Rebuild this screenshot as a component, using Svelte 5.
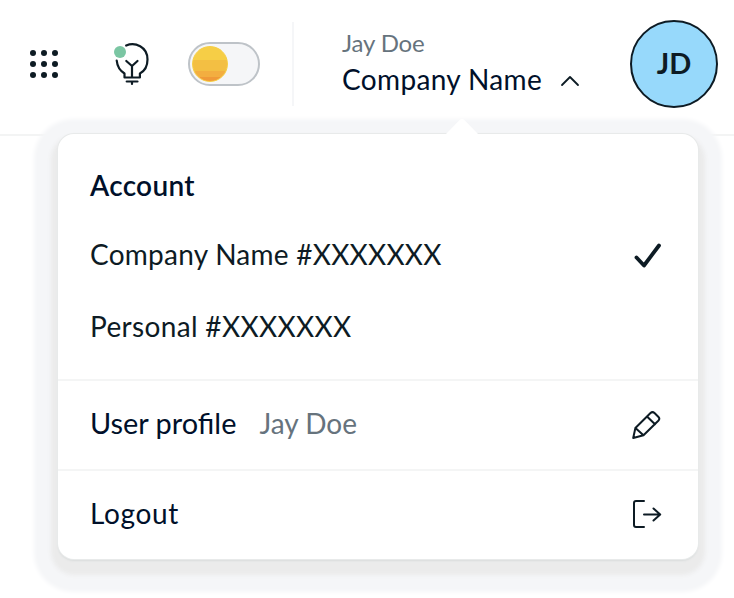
<script>
  const dots = [0, 1, 2].flatMap((r) => [0, 1, 2].map((c) => [c * 11 + 3, r * 11 + 3]));
  const accounts = [
    { name: 'Company Name #XXXXXXX', cls: 'company', active: true },
    { name: 'Personal #XXXXXXX', cls: 'personal', active: false },
  ];
</script>

<div class="page">
  <header>
    <button class="apps" aria-label="Apps">
      <svg width="28" height="28" viewBox="0 0 28 28">
        {#each dots as [x, y]}<circle cx={x} cy={y} r="3" fill="#0d1b24" />{/each}
      </svg>
    </button>
    <button class="bulb" aria-label="Tips">
      <svg width="36" height="44" viewBox="0 0 36 44" fill="none" stroke="#0d1b24" stroke-width="2.2" stroke-linecap="round" stroke-linejoin="round">
        <path d="M12.200 3.500C21-.2 33.500 4.500 33.500 17.500C33.500 25 29.700 29.500 25.900 31.500V35.500H10.500V31.500C6.500 29 3.300 25 2.700 18.500" />
        <path d="M18 35V24L12.300 19M18 24L23.500 19M12.700 39.500H23.500M18 39.500V42" />
        <circle cx="6" cy="10" r="6" fill="#7bc6a3" stroke="none" />
      </svg>
    </button>
    <div class="toggle"><div class="sun"></div></div>
    <div class="rule"></div>
    <button class="identity">
      <span class="names">
        <span class="user">Jay Doe</span>
        <span class="org">Company Name</span>
      </span>
      <svg width="20" height="12" viewBox="0 0 20 12" fill="none" stroke="#0d1b24" stroke-width="1.8" stroke-linecap="round" stroke-linejoin="round"><path d="M2 10L10 2L18 10" /></svg>
    </button>
    <div class="avatar">JD</div>
  </header>

  <div class="menu">
    <svg class="arrow" width="34" height="17" viewBox="0 0 34 17"><path d="M0 17L14.500 2Q17 0 19.500 2L34 17Z" fill="#fff" /></svg>
    <section class="accounts">
      <h2>Account</h2>
      {#each accounts as a}
        <div class="row">
          <span class={a.cls}>{a.name}</span>
          {#if a.active}
            <svg width="28" height="26" viewBox="0 0 28 26" fill="none" stroke="#0d1b24" stroke-width="3.8" stroke-linecap="round" stroke-linejoin="round"><path d="M2.500 14.500L10 22.500L25 2.500" /></svg>
          {/if}
        </div>
      {/each}
    </section>
    <section class="row line dark">
      <span class="profile">User profile</span>
      <span class="muted">Jay Doe</span>
      <svg width="30" height="30" viewBox="0 0 30 30" fill="none" stroke="#0d1b24" stroke-width="2" stroke-linejoin="round" stroke-linecap="round">
        <path d="M1.200 28L3.400 18L18.500 3Q20.500 1.200 22.500 3L26.500 7Q28.200 8.800 26.300 10.800L11.500 25.300ZM3.400 18L11.500 25.300M15 6.500L23 14.300" />
      </svg>
    </section>
    <section class="row line dark">
      <span class="logout">Logout</span>
      <svg width="30" height="30" viewBox="0 0 30 30" fill="none" stroke="#0d1b24" stroke-width="2" stroke-linecap="round" stroke-linejoin="round">
        <path d="M12 1H4Q2 1 2 3V25Q2 27 4 27H12M12 14.500H28M21.500 8.500L28.200 14.500L21.500 20.500" />
      </svg>
    </section>
  </div>
</div>

<style>
  :global(body) { background: #fff; }
  .page {
    position: relative;
    width: 734px;
    height: 598px;
    overflow: hidden;
    background: #fff;
    color: #0d1b24;
    font: 28px/36px Lato, "Noto Sans", sans-serif;
  }
  button { padding: 0; border: 0; background: none; font: inherit; color: inherit; text-align: left; }
  svg { display: block; flex: none; }
  header {
    position: relative;
    z-index: 1;
    display: flex;
    box-sizing: border-box;
    height: 128px;
    padding: 20px 16px 20px 30px;
    align-items: center;
  }
  .apps { margin-right: 56px; }
  .bulb { margin-right: 38px; }
  .toggle {
    box-sizing: border-box;
    width: 72px;
    height: 44px;
    padding: 2px;
    border: 2px solid #bec3c8;
    border-radius: 22px;
    background: #f5f6f8;
  }
  .sun {
    box-sizing: border-box;
    width: 36px;
    height: 36px;
    border: 1.5px solid #f7ce43;
    border-radius: 50%;
    background: linear-gradient(#f6ce46 0 38%, #f3bf43 38% 70%, #f3ae40 70% 88%, #f09a38 88%);
  }
  .rule { width: 2px; height: 84px; margin: 0 48px 0 32px; background: #f5f6f8; }
  .identity { display: flex; width: 288px; height: 88px; align-items: flex-start; }
  .names { width: 218px; display: flex; flex-direction: column; padding-top: 7px; }
  .user { font-size: 24px; line-height: 32px; letter-spacing: -0.15px; color: #66737d; }
  .org { color: #00102a; line-height: 40px; letter-spacing: 0.36px; }
  .identity svg { margin-top: 55px; }
  .avatar {
    box-sizing: border-box;
    flex: none;
    width: 88px;
    height: 88px;
    border: 2px solid #0d1b24;
    border-radius: 50%;
    background: #97d9fb;
    text-align: center;
    font-weight: 700;
    font-size: 29px;
    line-height: 82px;
  }
  .page::before {
    content: "";
    position: absolute;
    top: 134px;
    width: 100%;
    height: 2px;
    background: #f3f4f4;
  }
  .menu {
    position: absolute;
    left: 58px;
    top: 134px;
    width: 640px;
    height: 425px;
    border-radius: 16px;
    background: #fff;
    box-shadow: 0 0 0 1px #e8eaea, 0 2px 2px 0 #d9dcdc, 0 9px 4px 7px #ebebeb, 0 9px 4px 24px #f5f6f8;
  }
  .arrow { position: absolute; left: 387px; top: -16px; }
  .accounts { height: 245px; box-sizing: border-box; padding-top: 31px; }
  h2 { margin: 0 0 15px 32px; font-size: 28px; line-height: 40px; font-weight: 600; letter-spacing: 0.3px; color: #00102a; }
  .row { display: flex; height: 72px; box-sizing: border-box; padding: 0 36px 0 32px; align-items: center; }
  .row span { padding-bottom: 4px; }
  .accounts .row span { padding-bottom: 5px; }
  .row svg { margin-left: auto; }
  .company { letter-spacing: 0.25px; }
  .personal { letter-spacing: 0.34px; }
  .profile { font-size: 28.9px; }
  .logout { letter-spacing: 0.65px; }
  .line { height: 90px; border-top: 2px solid #f4f5f5; }
  .dark { color: #00102a; }
  .row .muted { margin-left: 23px; color: #66737d; }
</style>
